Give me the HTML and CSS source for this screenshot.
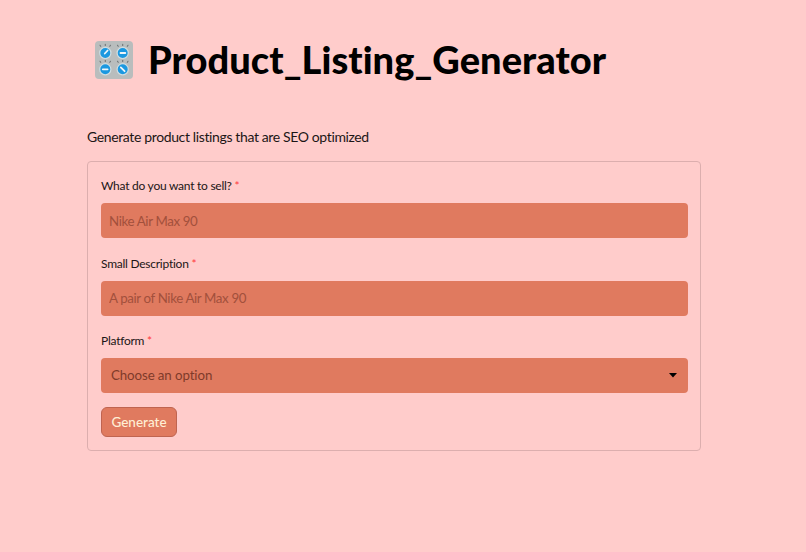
FILE: index.html
```html
<!DOCTYPE html>
<html lang="en">
<head>
<meta charset="utf-8">
<title>Product_Listing_Generator</title>
<link rel="stylesheet" href="styles.css">
</head>
<body>
<main class="page">
  <h1 class="title">
    <svg class="emoji" viewBox="0 0 38 38" aria-hidden="true">
      <rect width="38" height="38" rx="4" fill="#b9bdbd"/>
      <g stroke="#6f7475" stroke-width="1.100" stroke-linecap="round">
        <path d="M5 4.300l.7 1M10.300 3.200v1.200M15.500 4.300l-.7 1M22.500 4.300l.7 1M27.700 3.200v1.200M33 4.300l-.7 1M5 20.300l.7 1M10.300 19.200v1.200M15.500 20.300l-.7 1M22.500 20.300l.7 1M27.700 19.200v1.200M33 20.300l-.7 1"/>
      </g>
      <g fill="#1b98e0" stroke="#cfdde1" stroke-width="1.200">
        <circle cx="10.300" cy="12" r="5.600"/>
        <circle cx="27.700" cy="12" r="5.600"/>
        <circle cx="10.300" cy="28.300" r="5.600"/>
        <circle cx="27.700" cy="28.300" r="5.600"/>
      </g>
      <g stroke="#eef6fa" stroke-width="1.800" stroke-linecap="round">
        <path d="M9.800 12.500l2.800-3M25.500 12h4.800M7.800 28.300h4.800M25.800 26.400l3.800 3.800"/>
      </g>
    </svg>
    <span class="title-text">Product_Listing_Generator</span>
  </h1>
  <p class="lead">Generate product listings that are SEO optimized</p>
  <form class="card">
    <div class="field">
      <label class="label" for="product">What do you want to sell? <span class="req">*</span></label>
      <input class="input" id="product" type="text" placeholder="Nike Air Max 90">
    </div>
    <div class="field">
      <label class="label" for="desc">Small Description <span class="req">*</span></label>
      <input class="input" id="desc" type="text" placeholder="A pair of Nike Air Max 90">
    </div>
    <div class="field field-last">
      <span class="label">Platform <span class="req">*</span></span>
      <div class="select">
        <span>Choose an option</span>
        <svg class="caret" viewBox="0 0 8 5" aria-hidden="true"><path d="M0 0h8L4 4.500z"/></svg>
      </div>
    </div>
    <button class="button" type="button">Generate</button>
  </form>
</main>
</body>
</html>
```
FILE: styles.css
```css
* { box-sizing: border-box; }
html, body { margin: 0; height: 100%; }
body {
  background: #ffcccb;
  color: #111;
  font-family: "Lato", "Noto Sans", sans-serif;
  font-variant-ligatures: none;
  overflow: hidden;
}
.page {
  width: 614px;
  margin-left: 87px;
  padding-top: 36px;
}
.title {
  display: flex;
  align-items: center;
  gap: 15px;
  margin: 0 0 0 8px;
  height: 48px;
  font-size: 38px;
  font-weight: 900;
  letter-spacing: 0.05px;
  color: #000;
  line-height: 48px;
}
.title-text { margin-top: -2px; }
.emoji { width: 38px; height: 38px; flex: none; margin-top: -1px; }
.lead {
  margin: 43px 0 0;
  font-size: 14px;
  letter-spacing: -0.37px;
  line-height: 20px;
  color: #1c1616;
}
.card {
  margin-top: 14px;
  height: 290px;
  border: 1px solid #dcaeae;
  border-radius: 4px;
  padding: 14px 12px 13px 13px;
  display: flex;
  flex-direction: column;
  align-items: stretch;
}
.field { display: flex; flex-direction: column; margin-bottom: 15.500px; }
.field-last { margin-bottom: 14px; }
.label {
  font-size: 12px;
  letter-spacing: -0.25px;
  line-height: 19px;
  height: 19px;
  margin-bottom: 8px;
  color: #1c1616;
}
.req { color: #ff3b3b; }
.input, .select {
  height: 35px;
  border: 0;
  border-radius: 4px;
  background: #e07a5f;
  font-family: inherit;
  font-size: 13.300px;
  color: #7f3a2a;
}
.input { padding: 0 8px; outline: none; letter-spacing: -0.37px; font-variant-ligatures: none; }
.input::placeholder { color: #a2503c; opacity: 1; }
.select {
  display: flex;
  align-items: center;
  justify-content: space-between;
  padding: 0 11px 2px 10px;
  letter-spacing: -0.1px;
}
.caret { width: 8px; height: 5px; fill: #000; margin-top: 2px; }
.button {
  align-self: flex-start;
  width: 76px;
  height: 31px;
  padding: 0;
  border: 1px solid #bf6450;
  border-radius: 6px;
  background: #e07a5f;
  color: #ffefd5;
  font-family: inherit;
  font-size: 13.500px;
  font-weight: 500;
}
```
